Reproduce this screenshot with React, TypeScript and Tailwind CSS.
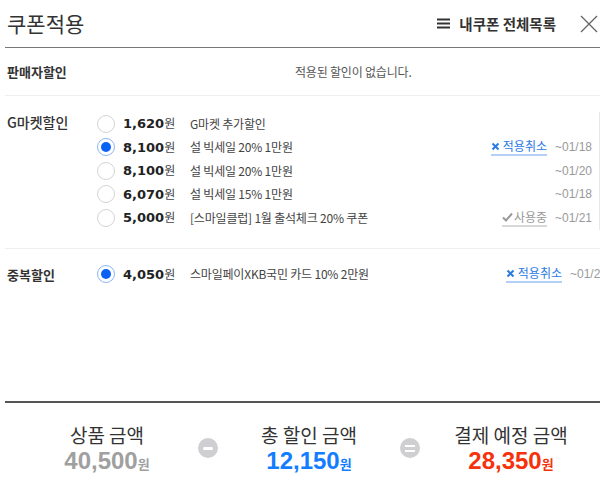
const KR = "font-['Noto_Sans_CJK_KR',sans-serif]";

interface Coupon {
    amount: string;
    desc: string;
    date: string;
    checked?: boolean;
    action?: "cancel" | "using";
}

const gmarket: Coupon[] = [
    { amount: "1,620", desc: "G마켓 추가할인", date: "" },
    { amount: "8,100", desc: "설 빅세일 20% 1만원", date: "~01/18", checked: true, action: "cancel" },
    { amount: "8,100", desc: "설 빅세일 20% 1만원", date: "~01/20" },
    { amount: "6,070", desc: "설 빅세일 15% 1만원", date: "~01/18" },
    { amount: "5,000", desc: "[스마일클럽] 1월 출석체크 20% 쿠폰", date: "~01/21", action: "using" },
];

function Radio({ checked }: { checked?: boolean }) {
    if (checked) {
        return (
            <span className="flex h-[18px] w-[18px] shrink-0 items-center justify-center rounded-full border border-[#8db6f4] bg-white">
                <span className="h-[10px] w-[10px] rounded-full bg-[#0a62f5]" />
            </span>
        );
    }
    return <span className="h-[18px] w-[18px] shrink-0 rounded-full border border-[#d4d4d4] bg-white" />;
}

function CouponRow({ c }: { c: Coupon }) {
    return (
        <div className="flex h-[23.5px] items-center">
            <Radio checked={c.checked} />
            <span className="ml-[8px] flex w-[67px] shrink-0 items-baseline">
                <span className="font-['DejaVu_Sans',sans-serif] text-[13px] font-bold text-[#222]">{c.amount}</span>
                <span className={`${KR} text-[12px] text-[#444]`}>원</span>
            </span>
            <span className={`${KR} flex-1 truncate text-[12px] tracking-[-0.2px] text-[#444]`}>{c.desc}</span>
            {c.action === "cancel" && (
                <span className={`${KR} flex items-center gap-[3px] border-b-2 border-[#b5d0f8] text-[12px] leading-[16px] text-[#2a7be4]`}>
                    <svg width="9" height="9" viewBox="0 0 9 9"><path d="M1.5 1.5 7.5 7.5M7.5 1.5 1.5 7.5" stroke="#2a7be4" strokeWidth="2" /></svg>
                    적용취소
                </span>
            )}
            {c.action === "using" && (
                <span className={`${KR} flex items-center gap-[1px] border-b-2 border-[#d8d8d8] text-[12px] leading-[16px] text-[#999]`}>
                    <svg width="11" height="10" viewBox="0 0 11 10"><path d="M1 5.5 4 8.5 10 1.5" stroke="#999" strokeWidth="2" fill="none" /></svg>
                    사용중
                </span>
            )}
            <span className="ml-[8px] w-[36px] shrink-0 whitespace-nowrap font-['Liberation_Sans',sans-serif] text-[12px] text-[#999]">{c.date}</span>
        </div>
    );
}

function Op({ kind }: { kind: "minus" | "equal" }) {
    return (
        <div className="flex w-[20px] shrink-0 justify-center pt-[15px]">
            <span className="flex h-[20px] w-[20px] flex-col items-center justify-center gap-[3px] rounded-full bg-[#cfcfd2]">
                {kind === "minus" ? (
                    <span className="h-[3px] w-[10px] rounded-sm bg-white" />
                ) : (
                    <>
                        <span className="h-[2px] w-[10px] bg-white" />
                        <span className="h-[2px] w-[10px] bg-white" />
                    </>
                )}
            </span>
        </div>
    );
}

function Sum({ label, amount, color }: { label: string; amount: string; color: string }) {
    return (
        <div className="flex w-[182px] shrink-0 flex-col items-center">
            <span className={`${KR} text-[19px] leading-[24px] text-[#333]`}>{label}</span>
            <span className={`flex items-baseline font-['Liberation_Sans',sans-serif] font-bold ${color}`}>
                <span className="text-[24px] leading-[28px]">{amount}</span>
                <span className={`${KR} text-[13px] font-bold`}>원</span>
            </span>
        </div>
    );
}

export default function App() {
    return (
        <div className="relative flex h-[484px] w-[600px] flex-col overflow-hidden bg-white pl-[5px]">
            <div className="flex h-[47px] shrink-0 items-center">
                <h1 className={`${KR} pl-[2px] text-[21px] font-normal text-[#333]`}>쿠폰적용</h1>
                <div className="ml-auto flex items-center">
                    <svg width="13" height="11" viewBox="0 0 13 11" className="mr-[9px]">
                        <path d="M0 1.5h13M0 5.5h13M0 9.5h13" stroke="#333" strokeWidth="2" />
                    </svg>
                    <span className={`${KR} text-[14.5px] font-bold text-[#333]`}>내쿠폰 전체목록</span>
                    <svg width="18" height="18" viewBox="0 0 18 18" className="ml-[24px] mr-[2px]">
                        <path d="M1 1 17 17M17 1 1 17" stroke="#666" strokeWidth="1.3" />
                    </svg>
                </div>
            </div>
            <div className="h-px shrink-0 bg-[#777]" />

            <div className="flex h-[48px] shrink-0 items-center border-b border-[#eee] pl-[2px]">
                <span className={`${KR} w-[90px] text-[13px] font-bold text-[#333]`}>판매자할인</span>
                <span className={`${KR} ml-[198px] text-[12px] tracking-[-0.2px] text-[#555]`}>적용된 할인이 없습니다.</span>
            </div>

            <div className="flex shrink-0 border-b border-[#eee] pb-[18px] pl-[2px] pt-[16px]">
                <span className={`${KR} w-[90px] shrink-0 text-[14px] font-medium text-[#333]`}>G마켓할인</span>
                <div className="flex flex-1 flex-col border-r border-[#e8e8e8] pr-[8px]">
                    {gmarket.map((c, i) => (
                        <CouponRow key={i} c={c} />
                    ))}
                </div>
            </div>

            <div className="flex shrink-0 pl-[2px] pt-[14px]">
                <span className={`${KR} w-[90px] shrink-0 text-[13px] font-bold leading-[23.5px] text-[#333]`}>중복할인</span>
                <div className="w-[517px] shrink-0 pr-[8px]">
                    <CouponRow c={{ amount: "4,050", desc: "스마일페이XKB국민 카드 10% 2만원", date: "~01/21", checked: true, action: "cancel" }} />
                </div>
            </div>

            <div className="mt-auto h-[2px] shrink-0 bg-[#555]" />
            <div className="flex h-[81px] shrink-0 pl-[11px] pt-[20px]">
                <Sum label="상품 금액" amount="40,500" color="text-[#a0a0a0]" />
                <Op kind="minus" />
                <Sum label="총 할인 금액" amount="12,150" color="text-[#137dff]" />
                <Op kind="equal" />
                <Sum label="결제 예정 금액" amount="28,350" color="text-[#f5320c]" />
            </div>
        </div>
    );
}
